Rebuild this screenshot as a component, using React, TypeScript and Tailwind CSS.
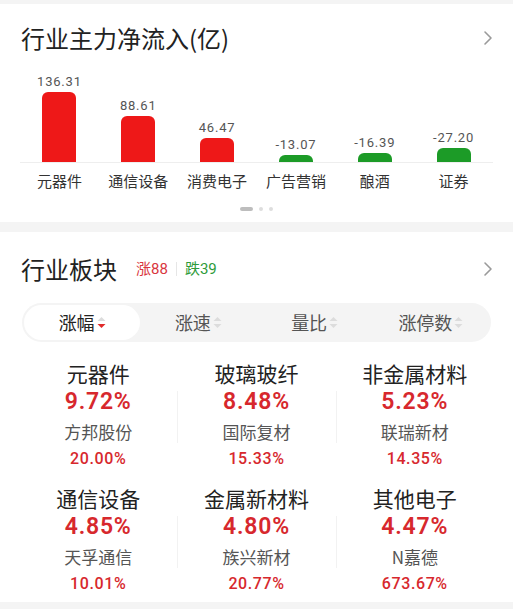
import React from 'react';

const cjk = { fontFamily: '"Noto Sans CJK SC", "Noto Sans", sans-serif' };
const num = { fontFamily: 'Roboto, "Noto Sans CJK SC", sans-serif' };

const flows = [
  { name: '元器件', value: '136.31', height: 70, up: true },
  { name: '通信设备', value: '88.61', height: 46, up: true },
  { name: '消费电子', value: '46.47', height: 24, up: true },
  { name: '广告营销', value: '-13.07', height: 7, up: false },
  { name: '酿酒', value: '-16.39', height: 9, up: false },
  { name: '证券', value: '-27.20', height: 14, up: false }
];

const sectors = [
  { name: '元器件', pct: '9.72%', stock: '方邦股份', stockPct: '20.00%' },
  { name: '玻璃玻纤', pct: '8.48%', stock: '国际复材', stockPct: '15.33%' },
  { name: '非金属材料', pct: '5.23%', stock: '联瑞新材', stockPct: '14.35%' },
  { name: '通信设备', pct: '4.85%', stock: '天孚通信', stockPct: '10.01%' },
  { name: '金属新材料', pct: '4.80%', stock: '族兴新材', stockPct: '20.77%' },
  { name: '其他电子', pct: '4.47%', stock: 'N嘉德', stockPct: '673.67%' }
];

const tabs = ['涨幅', '涨速', '量比', '涨停数'];

const Chevron = () => (
  <svg width="10" height="16" viewBox="0 0 10 16" fill="none">
    <path d="M2 2l6 6-6 6" stroke="#9a9a9a" strokeWidth="1.6" strokeLinecap="round" strokeLinejoin="round" />
  </svg>
);

const SortIcon = ({ active }: { active?: boolean }) => (
  <svg width="9" height="15" viewBox="0 0 9 15" className="ml-[2px]">
    <path d="M4.5 2L8.5 6H0.5Z" fill="#dcdcdc" />
    <path d="M4.5 13L8.5 9H0.5Z" fill={active ? '#e02a2a' : '#dcdcdc'} />
  </svg>
);

const App = () => {
  return (
    <div className="h-[609px] w-[513px] overflow-hidden bg-[#f4f4f4] pt-[4px]" style={cjk}>
      <div className="h-[218px] bg-white">
        <div className="flex h-[60px] items-center justify-between pl-[21px] pr-[20px] pt-[8px]">
          <div className="text-[24px] leading-[30px] text-[#222]">行业主力净流入(亿)</div>
          <Chevron />
        </div>
        <div className="mx-[20px] flex h-[99px] items-end border-b border-[#eeeeee]">
          {flows.map((f) => (
            <div key={f.name} className="flex flex-1 flex-col items-center justify-end">
              <div className="text-[13px] leading-[16px] tracking-[0.8px] text-[#555]" style={num}>
                {f.value}
              </div>
              <div
                className={`mt-[2px] w-[34px] rounded-t-[6px] ${f.up ? 'bg-[#ee1818]' : 'bg-[#1c9b27]'}`}
                style={{ height: f.height }}
              />
            </div>
          ))}
        </div>
        <div className="mx-[20px] flex pt-[8px]">
          {flows.map((f) => (
            <div key={f.name} className="flex-1 text-center text-[15px] leading-[20px] text-[#333]">
              {f.name}
            </div>
          ))}
        </div>
        <div className="mt-[16px] flex justify-center gap-[6px]">
          <div className="h-[4px] w-[13px] rounded-full bg-[#bdbdbd]" />
          <div className="h-[4px] w-[4px] rounded-full bg-[#dddddd]" />
          <div className="h-[4px] w-[4px] rounded-full bg-[#dddddd]" />
        </div>
      </div>

      <div className="mt-[10px] h-[370px] bg-white">
        <div className="flex h-[64px] items-center justify-between pl-[21px] pr-[20px] pt-[10px]">
          <div className="flex items-center">
            <span className="text-[24px] leading-[30px] text-[#222]">行业板块</span>
            <span className="ml-[19px] text-[15px] text-[#d9363e]">
              涨<span style={num}>88</span>
            </span>
            <span className="mx-[8px] h-[14px] w-px bg-[#e6e6e6]" />
            <span className="text-[15px] text-[#2e9b3a]">
              跌<span style={num}>39</span>
            </span>
          </div>
          <Chevron />
        </div>
        <div className="mx-[22px] mt-[7px] flex h-[39px] items-center rounded-full bg-[#f4f4f4] p-[2px]">
          {tabs.map((t, i) => (
            <div
              key={t}
              className={`flex h-full flex-1 items-center justify-center rounded-full text-[18px] ${
                i === 0 ? 'bg-white text-[#222]' : 'text-[#555]'
              }`}
            >
              {t}
              <SortIcon active={i === 0} />
            </div>
          ))}
        </div>
        <div className="mt-[17px] grid grid-cols-3 gap-y-[13px] px-[19px]">
          {sectors.map((s, i) => (
            <div key={s.name} className="relative flex flex-col items-center">
              {i % 3 !== 0 && <div className="absolute left-0 top-[32px] h-[52px] w-px bg-[#f2f2f2]" />}
              <div className="text-[21px] leading-[28px] text-[#222]">{s.name}</div>
              <div className="text-[23px] font-semibold leading-[30px] tracking-[0.8px] text-[#d7282d]" style={num}>
                {s.pct}
              </div>
              <div className="text-[17px] leading-[30px] text-[#555]">{s.stock}</div>
              <div className="text-[16px] font-medium leading-[24px] tracking-[0.6px] text-[#d7282d]" style={num}>
                {s.stockPct}
              </div>
            </div>
          ))}
        </div>
      </div>
    </div>
  );
};

export default App;
